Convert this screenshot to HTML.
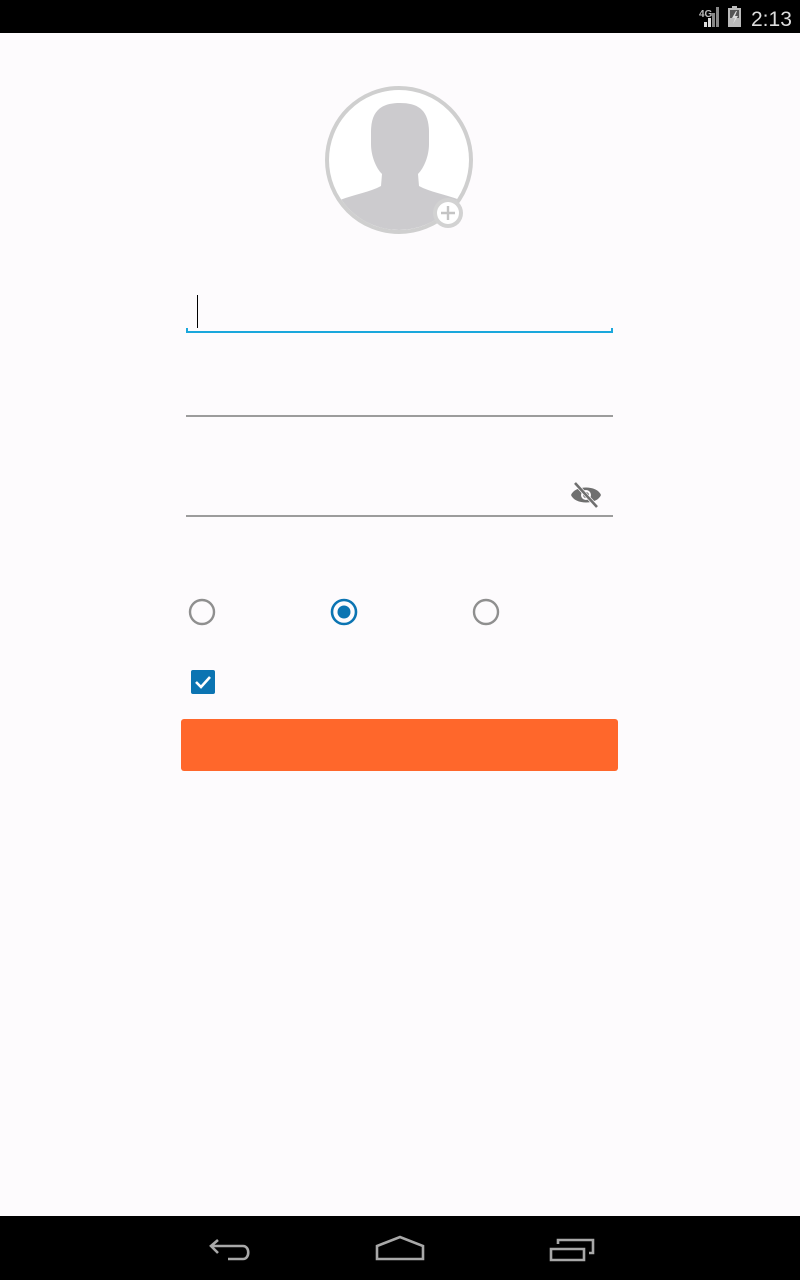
<!DOCTYPE html>
<html><head><meta charset="utf-8">
<style>
html,body{margin:0;padding:0;}
body{width:800px;height:1280px;background:#fdfbfd;position:relative;overflow:hidden;font-family:"Liberation Sans",sans-serif;}
.abs{position:absolute;}
</style></head><body>
<div class="abs" style="left:0;top:0;width:800px;height:33px;background:#000;"></div>
<svg class="abs" style="left:695px;top:3px" width="105" height="28" viewBox="0 0 105 28">
  <text x="4" y="14" font-size="10" font-weight="bold" fill="#bbb" font-family="Liberation Sans">4G</text>
  <rect x="9" y="19" width="3" height="5" fill="#ddd"/>
  <rect x="13" y="15" width="3" height="9" fill="#ddd"/>
  <rect x="17" y="10" width="3" height="14" fill="#888"/>
  <rect x="21" y="4" width="3" height="20" fill="#888"/>
  <rect x="33" y="5" width="13" height="19" fill="#bbb"/>
  <rect x="37" y="3" width="5" height="3" fill="#bbb"/>
  <rect x="35" y="7" width="9" height="8" fill="#555"/>
  <polygon points="41,8 37,15 40,15 38,21 43,13 40,13 42,8" fill="#ddd"/>
  <text x="56" y="23" font-size="21" fill="#ddd" font-family="Liberation Sans">2:13</text>
</svg>

<svg class="abs" style="left:320px;top:82px" width="160" height="160" viewBox="0 0 160 160">
  <defs><clipPath id="c"><circle cx="79" cy="78" r="70"/></clipPath></defs>
  <circle cx="79" cy="78" r="70" fill="#fff"/>
  <g clip-path="url(#c)" fill="#cccbce">
    <path d="M51,50 C51,28 62,21 80,21 C98,21 109,28 109,50 L109,62 C109,74 104,86 98,92 L99,104 C110,110 124,112 140,118 L150,160 L10,160 L20,118 C36,112 50,110 61,104 L62,92 C56,86 51,74 51,62 Z"/>
  </g>
  <circle cx="79" cy="78" r="72" fill="none" stroke="#cfcfcf" stroke-width="4"/>
  <circle cx="128" cy="131" r="15" fill="#d2d2d2"/>
  <circle cx="128" cy="131" r="11" fill="#fff"/>
  <path d="M128,124 V138 M121,131 H135" stroke="#c4c4c4" stroke-width="2.4"/>
</svg>

<div class="abs" style="left:197px;top:295px;width:1px;height:33px;background:#000;"></div>
<div class="abs" style="left:186px;top:331px;width:427px;height:2px;background:#1aa7dc;"></div>
<div class="abs" style="left:186px;top:328px;width:2px;height:5px;background:#1aa7dc;"></div>
<div class="abs" style="left:611px;top:328px;width:2px;height:5px;background:#1aa7dc;"></div>

<div class="abs" style="left:186px;top:415px;width:427px;height:2px;background:#9c9c9c;"></div>
<div class="abs" style="left:186px;top:515px;width:427px;height:2px;background:#9c9c9c;"></div>

<svg class="abs" style="left:570px;top:481px" width="32" height="28" viewBox="0 0 32 28">
  <path d="M1,14 C5,4 27,4 31,14 C27,24 5,24 1,14 Z" fill="#6f6f6f"/>
  <circle cx="16" cy="14" r="5" fill="#fdfbfd"/>
  <circle cx="16" cy="14" r="3" fill="#6f6f6f"/>
  <path d="M5,2 L27,26" stroke="#fdfbfd" stroke-width="4"/>
  <path d="M5,2 L27,26" stroke="#6f6f6f" stroke-width="2.6"/>
</svg>

<svg class="abs" style="left:186px;top:596px" width="330" height="34" viewBox="0 0 330 34">
  <circle cx="16" cy="16" r="12" fill="none" stroke="#8f8f8f" stroke-width="2.4"/>
  <circle cx="158" cy="16" r="12" fill="none" stroke="#0b74b2" stroke-width="2.6"/>
  <circle cx="158" cy="16" r="6.5" fill="#0b74b2"/>
  <circle cx="300" cy="16" r="12" fill="none" stroke="#8f8f8f" stroke-width="2.4"/>
</svg>

<svg class="abs" style="left:190px;top:669px" width="26" height="26" viewBox="0 0 26 26">
  <rect x="1" y="1" width="24" height="24" rx="2" fill="#0b74b2"/>
  <path d="M6,13 L11,18 L20,8" fill="none" stroke="#fff" stroke-width="2.6"/>
</svg>

<div class="abs" style="left:181px;top:719px;width:437px;height:52px;background:#ff672b;border-radius:3px;"></div>

<div class="abs" style="left:0;top:1216px;width:800px;height:64px;background:#000;"></div>
<svg class="abs" style="left:190px;top:1220px" width="420" height="60" viewBox="0 0 420 60">
  <g fill="none" stroke="#a8a8a8" stroke-width="2.6">
    <path d="M28,20 L21,26 L28,33 M21,26 H53 C60,26 60,39 53,39 H38"/>
    <path d="M187,39 V26 L210,17 L233,26 V39 Z"/>
    <path d="M361,29 H394 V40 H361 Z M368,24 V20 H403 V33 H399"/>
  </g>
</svg>
</body></html>
